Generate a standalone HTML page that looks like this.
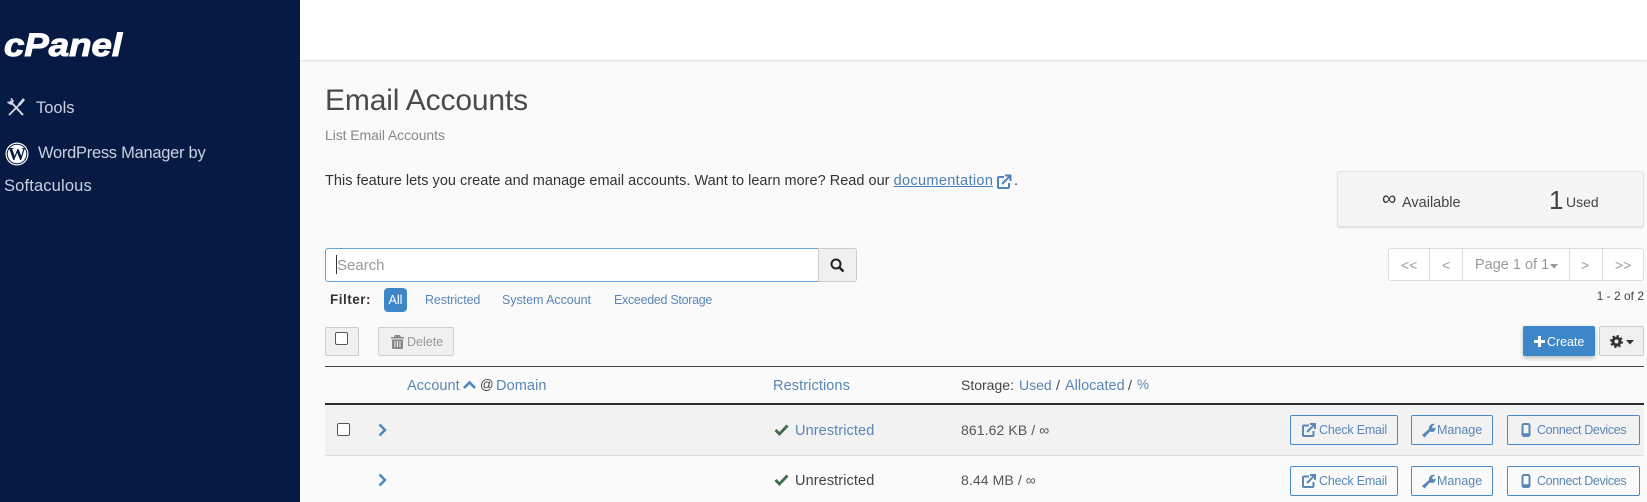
<!DOCTYPE html>
<html><head><meta charset="utf-8">
<style>
html,body{margin:0;padding:0;width:1647px;height:502px;overflow:hidden;background:#fafafa;font-family:"Liberation Sans",sans-serif;color:#333}
.a{position:absolute;white-space:nowrap;line-height:20px;height:20px}
.l{color:#5b86b5}
.side{position:absolute;left:0;top:0;width:300px;height:502px;background:#071a43}
.st{color:#c9d1e0;font-size:16.5px}
.box{position:absolute;box-sizing:border-box}
.btn{position:absolute;box-sizing:border-box;height:30px;border:1px solid #4a8ac4;border-radius:2px;color:#5b86b5;font-size:12.5px;line-height:28px;white-space:nowrap}
.btn span{position:absolute;top:0}
svg{position:absolute;overflow:visible}
</style></head><body>
<div class="box" style="left:300px;top:0;width:1347px;height:60px;background:#fff;box-shadow:0 1px 2px #d8d8d8"></div>
<div class="side"></div>
<svg style="left:0;top:0" width="130" height="70"><text x="4" y="56" font-family="Liberation Sans" font-weight="700" font-style="italic" font-size="32" fill="#fff" stroke="#fff" stroke-width="1" textLength="118" lengthAdjust="spacingAndGlyphs">cPanel</text></svg>
<svg style="left:6px;top:97px" width="20" height="20" fill="none" stroke="#d5dbe8"><path d="M3 18L13 8" stroke-width="1.800"/><path d="M13 8L18 2" stroke-width="2.600"/><path d="M4 4L17 18" stroke-width="2"/><path d="M1.500 5L5 7L7 4L5 1.500" stroke-width="1.600"/></svg>
<div class="a st" style="left:36px;top:98px">Tools</div>
<svg style="left:5px;top:142px" width="24" height="24"><circle cx="12" cy="12" r="11.500" fill="#fff"/><circle cx="12" cy="12" r="10.300" fill="#071a43"/><circle cx="12" cy="12" r="9.300" fill="#fff"/><text x="12" y="18" text-anchor="middle" font-family="Liberation Serif" font-weight="700" font-size="18" fill="#071a43" textLength="18" lengthAdjust="spacingAndGlyphs">W</text></svg>
<div class="a st" style="left:38px;top:143px;letter-spacing:-.28px">WordPress Manager by</div>
<div class="a st" style="left:4px;top:176px;letter-spacing:.15px">Softaculous</div>

<div class="a" style="left:325px;top:85px;height:32px;line-height:32px;font-size:30px;color:#4a4a4a;letter-spacing:-.15px">Email Accounts</div>
<div class="a" style="left:325px;top:125px;font-size:14px;color:#888;letter-spacing:-.08px">List Email Accounts</div>
<div class="a" style="left:325px;top:171px;font-size:14.500px;color:#333;letter-spacing:.02px">This feature lets you create and manage email accounts. Want to learn more? Read our <span class="l" style="text-decoration:underline;color:#4a7fb5;letter-spacing:.35px">documentation</span></div>
<svg style="left:996px;top:174px" width="16" height="16" fill="none" stroke="#4a86c0" stroke-width="2"><path d="M8 3H3a1 1 0 0 0-1 1v9a1 1 0 0 0 1 1h9a1 1 0 0 0 1-1V9M6 10L14 2M9 1.500h5.500V7"/></svg>
<div class="a" style="left:1014px;top:171px;font-size:14.500px">.</div>

<div class="box" style="left:1337px;top:171px;width:307px;height:56px;background:#f5f5f5;border:1px solid #e3e3e3;border-radius:3px;box-shadow:0 1px 1px #ddd"></div>
<div class="a" style="left:1382px;top:189px;font-size:20px;color:#333">∞</div>
<div class="a" style="left:1402px;top:193px;font-size:14.500px;color:#444">Available</div>
<div class="a" style="left:1549px;top:188px;font-size:26px;height:24px;line-height:24px;color:#444">1</div>
<div class="a" style="left:1566px;top:192px;font-size:14px;color:#444">Used</div>

<div class="box" style="left:325px;top:248px;width:494px;height:34px;background:#fff;border:1px solid #66a3d8;border-radius:3px 0 0 3px"></div>
<div class="box" style="left:336px;top:255px;width:1px;height:19px;background:#333"></div>
<div class="a" style="left:337px;top:256px;font-size:15px;color:#999">Search</div>
<div class="box" style="left:818px;top:248px;width:39px;height:34px;background:#f0f0f0;border:1px solid #ccc;border-radius:0 3px 3px 0"></div>
<svg style="left:830px;top:258px" width="14" height="14" fill="none" stroke="#222" stroke-width="2"><circle cx="6" cy="6" r="4.500"/><path d="M9.500 9.500L13.500 13.500" stroke-width="2.500"/></svg>

<div class="a" style="left:330px;top:290px;font-size:13.500px;font-weight:700;color:#333;letter-spacing:.5px">Filter:</div>
<div class="box" style="left:384px;top:288px;width:23px;height:24px;background:#3d87c9;border-radius:4px;color:#fff;font-size:12.500px;line-height:24px;text-align:center">All</div>
<div class="a l" style="left:425px;top:290px;font-size:12.500px;letter-spacing:-.1px">Restricted</div>
<div class="a l" style="left:502px;top:290px;font-size:12.500px;letter-spacing:-.05px">System Account</div>
<div class="a l" style="left:614px;top:290px;font-size:12.500px;letter-spacing:-.3px">Exceeded Storage</div>

<div class="box" style="left:325px;top:327px;width:34px;height:29px;background:#f0f0f0;border:1px solid #ccc;border-radius:2px"></div>
<div class="box" style="left:335px;top:332px;width:13px;height:13px;background:#fff;border:1px solid #555;border-radius:2px"></div>
<div class="box" style="left:378px;top:327px;width:76px;height:29px;background:#f0f0f0;border:1px solid #d0d0d0;border-radius:2px"></div>
<svg style="left:391px;top:335px" width="13" height="14" fill="#888"><path d="M4 0h5l1 2h3v1.500H0V2h3zM1 4.500h11V13a1 1 0 0 1-1 1H2a1 1 0 0 1-1-1z"/><path d="M4 6v6M6.500 6v6M9 6v6" stroke="#f0f0f0" stroke-width="1"/></svg>
<div class="a" style="left:407px;top:332px;font-size:12.500px;color:#999">Delete</div>

<div class="box" style="left:1388px;top:248px;width:256px;height:33px;background:#fff;border:1px solid #ddd;border-radius:3px"></div>
<div class="box" style="left:1429px;top:249px;width:1px;height:31px;background:#ddd"></div>
<div class="box" style="left:1462px;top:249px;width:1px;height:31px;background:#ddd"></div>
<div class="box" style="left:1569px;top:249px;width:1px;height:31px;background:#ddd"></div>
<div class="box" style="left:1602px;top:249px;width:1px;height:31px;background:#ddd"></div>
<div class="a" style="left:1401px;top:255px;font-size:14px;color:#999">&lt;&lt;</div>
<div class="a" style="left:1442px;top:255px;font-size:14px;color:#999">&lt;</div>
<div class="a" style="left:1475px;top:255px;font-size:14.500px;color:#999">Page 1 of 1</div>
<svg style="left:1550px;top:264px" width="8" height="5" fill="#999"><path d="M0 0h8L4 4.500z"/></svg>
<div class="a" style="left:1581px;top:255px;font-size:14px;color:#999">&gt;</div>
<div class="a" style="left:1615px;top:255px;font-size:14px;color:#999">&gt;&gt;</div>
<div class="a" style="right:3px;top:286px;font-size:12px;color:#444">1 - 2 of 2</div>

<div class="box" style="left:1523px;top:326px;width:72px;height:30px;background:#3d87c9;border-radius:2px;box-shadow:0 2px 4px #bbb"></div>
<svg style="left:1534px;top:336px" width="11" height="11" fill="#fff"><path d="M4 0h3v4h4v3H7v4H4V7H0V4h4z"/></svg>
<div class="a" style="left:1547px;top:332px;font-size:12.500px;color:#fff;letter-spacing:-.05px">Create</div>
<div class="box" style="left:1599px;top:326px;width:45px;height:30px;background:#f0f0f0;border:1px solid #ccc;border-radius:2px"></div>
<svg style="left:1610px;top:335px" width="14" height="14"><circle cx="6.500" cy="6.500" r="3.500" fill="none" stroke="#333" stroke-width="3"/><circle cx="6.500" cy="6.500" r="5.500" fill="none" stroke="#333" stroke-width="2" stroke-dasharray="2.200 2.120"/></svg>
<svg style="left:1626px;top:340px" width="8" height="5" fill="#333"><path d="M0 0h8L4 4.500z"/></svg>

<div class="box" style="left:325px;top:366px;width:1319px;height:1px;background:#444"></div>
<div class="a l" style="left:407px;top:376px;font-size:14.500px;letter-spacing:.05px">Account</div>
<svg style="left:463px;top:381px" width="13" height="8" fill="none" stroke="#4a86c0" stroke-width="2.600"><path d="M1 7L6.500 1.500L12 7"/></svg>
<div class="a" style="left:480px;top:375px;font-size:13.500px;color:#444">@</div>
<div class="a l" style="left:496px;top:376px;font-size:14.500px;letter-spacing:.1px">Domain</div>
<div class="a l" style="left:773px;top:376px;font-size:14.500px;letter-spacing:.1px">Restrictions</div>
<div class="a" style="left:961px;top:375px;font-size:14px;color:#444">Storage:</div>
<div class="a l" style="left:1019px;top:375px;font-size:14px">Used</div>
<div class="a" style="left:1056px;top:375px;font-size:14px;color:#444">/</div>
<div class="a l" style="left:1065px;top:376px;font-size:14.500px">Allocated</div>
<div class="a" style="left:1128px;top:375px;font-size:14px;color:#444">/</div>
<div class="a l" style="left:1137px;top:375px;font-size:13.500px">%</div>
<div class="box" style="left:325px;top:403px;width:1319px;height:2px;background:#2d2d2d"></div>
<div class="box" style="left:325px;top:405px;width:1319px;height:51px;background:#f2f2f2;border-bottom:1px solid #ddd"></div>

<div class="box" style="left:337px;top:423px;width:13px;height:13px;background:#fff;border:1px solid #555;border-radius:2px"></div>
<svg style="left:378px;top:423px" width="9" height="14" fill="none" stroke="#4a86c0" stroke-width="2.400"><path d="M1.500 1.500L7 7L1.500 12.500"/></svg>
<svg style="left:378px;top:473px" width="9" height="14" fill="none" stroke="#4a86c0" stroke-width="2.400"><path d="M1.500 1.500L7 7L1.500 12.500"/></svg>
<svg style="left:774px;top:424px" width="15" height="12" fill="none" stroke="#3d6b4c" stroke-width="2.800"><path d="M1.500 6L5.500 10L13.500 1.500"/></svg>
<svg style="left:774px;top:474px" width="15" height="12" fill="none" stroke="#3d6b4c" stroke-width="2.800"><path d="M1.500 6L5.500 10L13.500 1.500"/></svg>
<div class="a l" style="left:795px;top:421px;font-size:14.500px;letter-spacing:.1px">Unrestricted</div>
<div class="a" style="left:795px;top:471px;font-size:14.500px;letter-spacing:.1px;color:#444">Unrestricted</div>
<div class="a" style="left:961px;top:420px;font-size:14px;color:#555;letter-spacing:.1px">861.62 KB / ∞</div>
<div class="a" style="left:961px;top:470px;font-size:14px;color:#555;letter-spacing:.1px">8.44 MB / ∞</div>

<div class="btn" style="left:1290px;top:415px;width:108px"><span style="left:28px;letter-spacing:-.2px">Check Email</span></div>
<svg style="left:1302px;top:423px" width="14" height="14" fill="none" stroke="#5b86b5" stroke-width="2"><path d="M7 2.500H2a1 1 0 0 0-1 1v8.500a1 1 0 0 0 1 1h8.500a1 1 0 0 0 1-1V8M5 9L13 1M8 1h5v5"/></svg>
<div class="btn" style="left:1411px;top:415px;width:82px"><span style="left:25px">Manage</span></div>
<svg style="left:1422px;top:423px" width="14" height="14" fill="#5b86b5"><path d="M0 12L7 6C6.500 3 9 0 13 1L10 3.500L11 5.500L13.500 4.500C14 8 11 10 8 8.500L2.500 14.500z"/></svg>
<div class="btn" style="left:1507px;top:415px;width:133px"><span style="left:29px;letter-spacing:-.35px">Connect Devices</span></div>
<svg style="left:1521px;top:423px" width="10" height="15" fill="none" stroke="#5b86b5" stroke-width="2"><rect x="1.500" y="1" width="7" height="12" rx="1.500"/><path d="M2 11.500h6" stroke-width="2.500"/></svg>

<div class="btn" style="left:1290px;top:466px;width:108px"><span style="left:28px;letter-spacing:-.2px">Check Email</span></div>
<svg style="left:1302px;top:474px" width="14" height="14" fill="none" stroke="#5b86b5" stroke-width="2"><path d="M7 2.500H2a1 1 0 0 0-1 1v8.500a1 1 0 0 0 1 1h8.500a1 1 0 0 0 1-1V8M5 9L13 1M8 1h5v5"/></svg>
<div class="btn" style="left:1411px;top:466px;width:82px"><span style="left:25px">Manage</span></div>
<svg style="left:1422px;top:474px" width="14" height="14" fill="#5b86b5"><path d="M0 12L7 6C6.500 3 9 0 13 1L10 3.500L11 5.500L13.500 4.500C14 8 11 10 8 8.500L2.500 14.500z"/></svg>
<div class="btn" style="left:1507px;top:466px;width:133px"><span style="left:29px;letter-spacing:-.35px">Connect Devices</span></div>
<svg style="left:1521px;top:474px" width="10" height="15" fill="none" stroke="#5b86b5" stroke-width="2"><rect x="1.500" y="1" width="7" height="12" rx="1.500"/><path d="M2 11.500h6" stroke-width="2.500"/></svg>
</body></html>
